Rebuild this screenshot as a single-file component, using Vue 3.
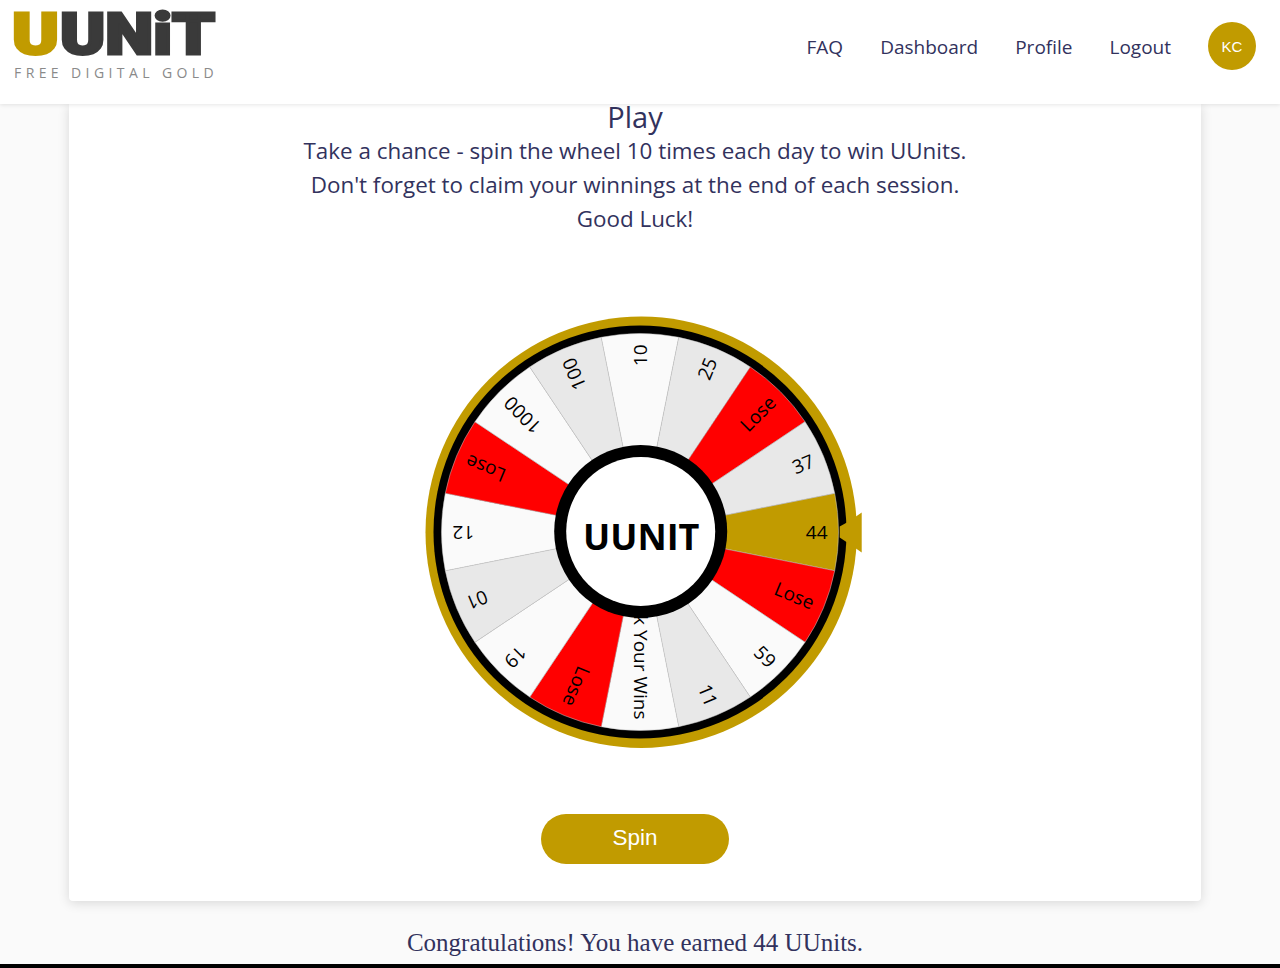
<template>
  <div class="page">
    <header class="topbar">
      <a class="brand">
        <svg class="brand-mark" width="206" height="68" viewBox="0 0 206 68">
          <text x="-2" y="54" class="mark-gold" textLength="47" lengthAdjust="spacingAndGlyphs">U</text>
          <text x="46" y="54" class="mark-dark" textLength="155" lengthAdjust="spacingAndGlyphs">UNiT</text>
        </svg>
        <span class="brand-sub">FREE DIGITAL GOLD</span>
      </a>
      <nav class="nav">
        <a v-for="link in links" :key="link">{{ link }}</a>
        <span class="avatar">KC</span>
      </nav>
    </header>

    <main class="content">
      <section class="card">
        <h2>Play</h2>
        <p>Take a chance - spin the wheel 10 times each day to win UUnits.</p>
        <p>Don't forget to claim your winnings at the end of each session.</p>
        <p>Good Luck!</p>

        <svg class="wheel" width="440" height="436" viewBox="-216 -216 440 436">
          <circle cx="1.2" cy="0.25" r="215.7" fill="#c19b00" />
          <circle r="206.5" fill="#000" />
          <path v-for="seg in segments" :key="seg.angle" :d="seg.path" :fill="seg.fill" stroke="#c8c8c8" stroke-width="0.5" />
          <text
            v-for="seg in segments"
            :key="'t' + seg.angle"
            class="seg-label"
            x="187.5"
            y="6.5"
            text-anchor="end"
            :transform="`rotate(${seg.angle})`"
          >{{ seg.label }}</text>
          <circle cx="0.7" cy="-0.5" r="86.5" fill="#000" />
          <circle cx="0.7" cy="-0.5" r="74.5" fill="#fff" />
          <text class="hub" x="1.2" y="17.5" text-anchor="middle">UUNIT</text>
          <polygon points="199.7,-5.5 208.7,-10.5 221.7,-19.5 221.7,20.5 208.7,11.5 199.7,5.5" fill="#c19b00" />
        </svg>

        <button class="spin">Spin</button>
      </section>
      <p class="result">Congratulations! You have earned 44 UUnits.</p>
    </main>
    <footer class="foot"></footer>
  </div>
</template>

<script setup>
const links = ['FAQ', 'Dashboard', 'Profile', 'Logout'];

const LIGHT = '#fafafa';
const GREY = '#e8e8e8';
const RED = '#ff0000';
const GOLD = '#c19b00';

// clockwise from the pointer on the right
const items = [
  ['44', GOLD], ['Lose', RED], ['59', LIGHT], ['11', GREY],
  ['Check Your Wins', LIGHT], ['Lose', RED], ['19', LIGHT], ['01', GREY],
  ['12', LIGHT], ['Lose', RED], ['1000', LIGHT], ['100', GREY],
  ['10', LIGHT], ['25', GREY], ['Lose', RED], ['37', GREY]
];

const R = 198.5;
const step = 22.5;

const point = (deg) => {
  const a = (deg * Math.PI) / 180;
  return `${(R * Math.cos(a)).toFixed(2)} ${(R * Math.sin(a)).toFixed(2)}`;
};

const segments = items.map(([label, fill], i) => {
  const angle = i * step;
  return {
    label,
    fill,
    angle,
    path: `M0 0L${point(angle - step / 2)}A${R} ${R} 0 0 1 ${point(angle + step / 2)}Z`
  };
});
</script>

<style>
html, body {
  margin: 0;
  background: #fafafa;
}
</style>

<style scoped>
.page {
  height: 968px;
  overflow: hidden;
  display: flex;
  flex-direction: column;
  font-family: "Open Sans", "Noto Sans", sans-serif;
  color: #32325d;
}

.topbar {
  height: 104px;
  flex: none;
  background: #fff;
  box-shadow: 0 1px 4px rgba(0, 0, 0, 0.1);
  display: flex;
  justify-content: space-between;
  padding: 0 24px 0 14px;
  box-sizing: border-box;
  position: relative;
  z-index: 2;
}

.brand {
  display: flex;
  flex-direction: column;
}

.brand-mark {
  display: block;
  margin-bottom: -6px;
  overflow: visible;
}

.mark-gold,
.mark-dark {
  font-family: Roboto, "Liberation Sans", sans-serif;
  font-weight: 900;
  font-size: 58px;
  stroke-width: 3;
  stroke-linejoin: miter;
}

.mark-gold {
  fill: #c19b00;
  stroke: #c19b00;
}

.mark-dark {
  fill: #3a3a3a;
  stroke: #3a3a3a;
}

.brand-sub {
  font-size: 14px;
  letter-spacing: 4.4px;
  color: #8a8a8a;
  line-height: 20px;
  margin-top: 1px;
  white-space: nowrap;
}

.nav {
  display: flex;
  align-items: center;
  gap: 37px;
  height: 92px;
}

.nav a {
  font-size: 19px;
  margin-top: 2px;
}

.avatar {
  width: 48px;
  height: 48px;
  border-radius: 50%;
  background: #c19b00;
  color: #fff;
  font-family: "Liberation Sans", sans-serif;
  font-size: 15px;
  display: flex;
  align-items: center;
  justify-content: center;
}

.content {
  flex: 1;
  display: flex;
  flex-direction: column;
  align-items: center;
  min-height: 0;
  padding-right: 10px;
}

.card {
  width: 1132px;
  height: 797px;
  flex: none;
  box-sizing: border-box;
  background: #fff;
  border-radius: 0 0 4px 4px;
  box-shadow: 0 2px 12px rgba(0, 0, 0, 0.14);
  display: flex;
  flex-direction: column;
  align-items: center;
}

.card h2 {
  margin: -4px 0 0;
  font-size: 29px;
  font-weight: 400;
  line-height: 34px;
}

.card p {
  margin: 0;
  font-size: 22.4px;
  line-height: 34px;
}

.wheel {
  display: block;
  margin: 79.5px 0 0 18.6px;
  overflow: visible;
}

.seg-label {
  font-size: 19px;
  fill: #000;
}

.hub {
  font-size: 36px;
  font-weight: 700;
  fill: #000;
}

.spin {
  margin-top: 62.5px;
  width: 188px;
  height: 50px;
  flex: none;
  border: none;
  border-radius: 25px;
  padding: 0 0 3px;
  background: #c19b00;
  color: #fff;
  font-family: "Liberation Sans", sans-serif;
  font-size: 22.5px;
}

.result {
  margin: 27px 0 0;
  font-family: "Liberation Serif", serif;
  font-size: 25px;
  line-height: 30px;
}

.foot {
  height: 4px;
  flex: none;
  background: #000;
}
</style>
